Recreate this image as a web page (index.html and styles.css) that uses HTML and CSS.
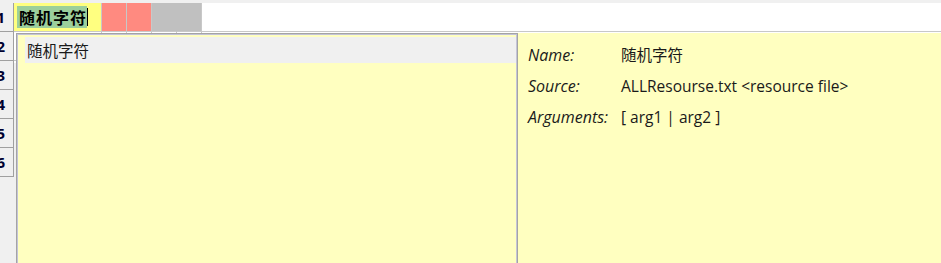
FILE: index.html
```html
<!DOCTYPE html>
<html lang="zh">
<head>
  <meta charset="UTF-8" />
  <title>随机字符</title>
  <link rel="stylesheet" href="styles.css">
</head>
<body>
  <div class="sheet">
    <div class="row-heads">
      <div class="row-head"><span>1</span></div>
      <div class="row-head"><span>2</span></div>
      <div class="row-head"><span>3</span></div>
      <div class="row-head"><span>4</span></div>
      <div class="row-head"><span>5</span></div>
      <div class="row-head"><span>6</span></div>
    </div>
    <div class="grid">
      <div class="row">
        <div class="cell edit"><span class="sel">随机字符</span><span class="caret"></span></div>
        <div class="cell red"></div>
        <div class="cell red"></div>
        <div class="cell grey join"></div>
        <div class="cell grey"></div>
        <div class="cell fill"></div>
      </div>
      <div class="row">
        <div class="cell first"></div>
        <div class="cell"></div>
        <div class="cell"></div>
        <div class="cell"></div>
        <div class="cell"></div>
        <div class="cell fill"></div>
      </div>
    </div>
  </div>

  <!-- autocomplete popup -->
  <div class="popup">
    <div class="list">
      <div class="item">随机字符</div>
    </div>
    <div class="info">
      <span class="label">Name:</span>
      <span class="value">随机字符</span>
      <span class="label">Source:</span>
      <span class="value">ALLResourse.txt &lt;resource file&gt;</span>
      <span class="label">Arguments:</span>
      <span class="value">[ arg1 | arg2 ]</span>
    </div>
  </div>
</body>
</html>
```

FILE: styles.css
```css
body {
  margin: 0;
  height: 263px;
  overflow: hidden;
  position: relative;
  background: #f0f0f0;
  font-family: 'Open Sans', 'Noto Sans CJK SC', sans-serif;
  color: #1a1a1a;
}
.sheet {
  display: flex;
  margin-top: 3px;
}
.row-heads {
  width: 14px;
  flex: none;
}
.row-head {
  height: 28px;
  border-right: 1px solid #a0a0a0;
  border-bottom: 1px solid #a0a0a0;
  display: flex;
  align-items: center;
  justify-content: flex-end;
  padding-right: 8px;
  overflow: hidden;
  font-weight: bold;
  font-size: 15px;
  color: #000030;
  background: #f0f0f0;
}
.grid {
  flex: 1;
  background: #fff;
  height: 60px;
}
.row {
  display: flex;
}
.cell {
  width: 24px;
  height: 28px;
  border-right: 1px solid #c8c8c8;
  border-bottom: 1px solid #c8c8c8;
  flex: none;
}
.cell.first {
  width: 87px;
}
.cell.edit {
  background: #ffff80;
  display: flex;
  align-items: center;
  padding-left: 3px;
  width: 84px;
}
.sel {
  background: #9ccf9c;
  font-family: 'Noto Sans CJK SC', sans-serif;
  font-weight: bold;
  font-size: 16px;
  letter-spacing: 1px;
  line-height: 22px;
  padding: 0 0 0 2px;
  color: #000;
}
.caret {
  width: 1px;
  height: 18px;
  background: #000;
}
.red {
  background: #ff8a80;
}
.grey {
  background: #c0c0c0;
}
.grey.join {
  border-right-color: #c0c0c0;
}
.cell.fill {
  flex: 1;
  border-right: none;
}
.row + .row .cell.fill {
  border-bottom: none;
}
.popup {
  position: absolute;
  left: 16px;
  top: 33px;
  right: 0;
  height: 240px;
  display: flex;
}
.list {
  width: 491px;
  flex: none;
  border: 1px solid #a4a4a4;
  box-shadow: inset 0 0 0 1px #c4c4d8;
  background: #ffffc0;
  padding: 3px 1px 0 8px;
}
.item {
  height: 26px;
  line-height: 26px;
  background: #f0f0f0;
  padding-left: 2px;
  font-size: 15.5px;
  font-family: 'Noto Sans CJK SC', sans-serif;
}
.info {
  flex: 1;
  background: #ffffc0;
  padding: 6px 0 0 10px;
  display: grid;
  grid-template-columns: 93px 1fr;
  grid-auto-rows: 31px;
  align-content: start;
  align-items: center;
}
.label {
  font-style: italic;
  font-size: 16px;
}
.value {
  font-size: 15.5px;
}
```
